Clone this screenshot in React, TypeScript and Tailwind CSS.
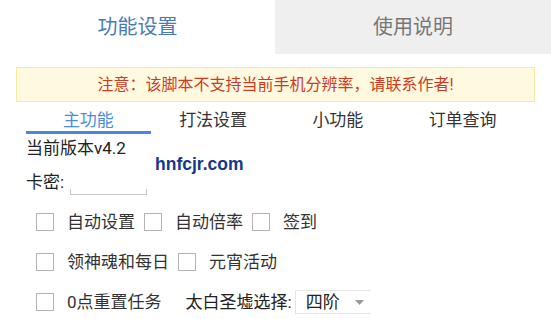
import React from "react";

const font = { fontFamily: "Roboto, 'Noto Sans CJK SC', sans-serif" };

function Box() {
  return <div className="w-[18px] h-[18px] shrink-0 border border-[#b4b4b4] bg-white" />;
}

function Check({ label }: { label: string }) {
  return (
    <div className="flex items-center mr-[9px]">
      <Box />
      <span className="ml-[13px] text-[17px] leading-[22px] text-[#333]">{label}</span>
    </div>
  );
}

export default function App() {
  const tabs = ["主功能", "打法设置", "小功能", "订单查询"];
  return (
    <div className="relative w-[551px] h-[319px] bg-white overflow-hidden" style={font}>
      <div className="flex h-[54px]">
        <div className="w-[275px] flex items-center justify-center text-[20px] text-[#4a7bb8]">功能设置</div>
        <div className="flex-1 flex items-center justify-center bg-[#efefef] text-[20px] text-[#777]">使用说明</div>
      </div>

      <div className="mt-[13px] ml-[16px] w-[519px] h-[35px] flex items-center justify-center border border-[#f7e9a6] bg-[#fffadf] text-[16px] text-[#cf3b22]">
        注意：该脚本不支持当前手机分辨率，请联系作者!
      </div>

      <div className="ml-[26px] w-[499px] flex">
        {tabs.map((t, i) => (
          <div key={t} className="flex-1 flex flex-col">
            <div className={`h-[29px] flex items-end justify-center text-[17px] leading-[22px] ${i === 0 ? "text-[#4a8de0]" : "text-[#333]"}`}>
              {t}
            </div>
            <div className={`h-[3px] ${i === 0 ? "bg-[#4a86dc]" : ""}`} />
          </div>
        ))}
      </div>

      <div className="pl-[26px]">
        <div className="mt-[2px] text-[17px] leading-[24px] text-[#222]">当前版本v4.2</div>
        <div className="mt-[8px] h-[28px] flex items-start pt-[2px]">
          <span className="text-[17px] leading-[24px] text-[#222]">卡密:</span>
          <div className="ml-[6px] mt-[19px] w-[77px] h-[6px] border-x border-b border-[#c8c8c8]" />
        </div>

        <div className="mt-[6px] pl-[10px]">
          <div className="h-[40px] flex items-center">
            <Check label="自动设置" />
            <Check label="自动倍率" />
            <Check label="签到" />
          </div>
          <div className="h-[40px] flex items-center">
            <Check label="领神魂和每日" />
            <Check label="元宵活动" />
          </div>
          <div className="h-[40px] flex items-center">
            <Check label="0点重置任务" />
            <span className="ml-[15px] text-[17px] leading-[22px] text-[#222]">太白圣墟选择:</span>
            <div className="ml-[3px] w-[76px] h-[24px] flex items-center border border-r-0 border-[#e6e6e6] pl-[10px]">
              <span className="text-[17px] leading-[22px] text-[#222]">四阶</span>
              <svg className="ml-[15px]" width="9" height="5" viewBox="0 0 9 5">
                <path d="M0 0h9L4.5 5z" fill="#9a9a9a" />
              </svg>
            </div>
          </div>
        </div>
      </div>

      <div
        className="absolute left-[155px] top-[156px] text-[17.5px] leading-[17px] font-bold text-[#17378a]"
        style={{ fontFamily: "'Liberation Sans', Arial, sans-serif" }}
      >
        hnfcjr.com
      </div>
    </div>
  );
}
